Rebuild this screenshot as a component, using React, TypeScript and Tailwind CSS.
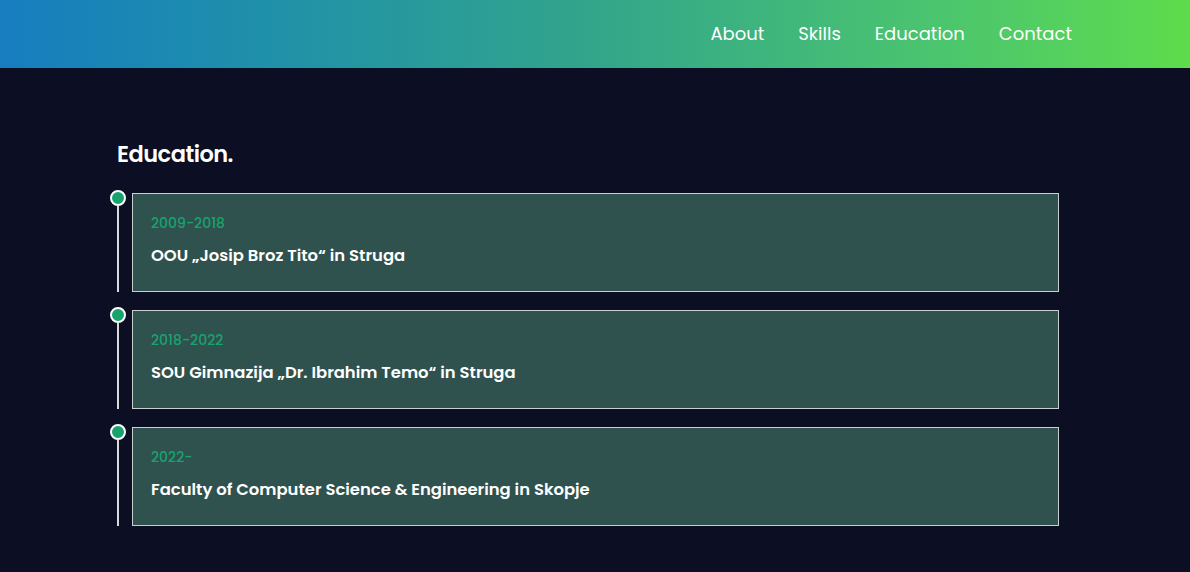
const navItems = ['About', 'Skills', 'Education', 'Contact'];

const education = [
  { years: '2009-2018', school: 'OOU „Josip Broz Tito“ in Struga' },
  { years: '2018-2022', school: 'SOU Gimnazija „Dr. Ibrahim Temo“ in Struga' },
  { years: '2022-', school: 'Faculty of Computer Science & Engineering in Skopje' },
];

function TimelineItem({ years, school, last }: { years: string; school: string; last: boolean }) {
  return (
    <div className={`flex ${last ? '' : 'pb-[15px]'}`}>
      <div className="flex w-4 flex-col items-center">
        <div className="h-4 w-4 shrink-0 rounded-full border-2 border-white bg-[#17a26e]" />
        <div className="w-[2px] flex-1 bg-[#d9d9d9]" />
      </div>
      <div className="ml-[6px] mt-[3px] flex h-[99px] flex-1 flex-col border border-[#c9cfcd] bg-[#2f524f] pl-[18px] pt-[19px]">
        <p className="text-[14px] font-medium leading-5 text-[#18a36c]">{years}</p>
        <h3 className="mt-[11px] text-[16.4px] font-semibold leading-6 text-white">{school}</h3>
      </div>
    </div>
  );
}

export default function App() {
  return (
    <div
      className="min-h-[572px] bg-[#0c0e23]"
      style={{ fontFamily: 'Poppins, Inter, "Noto Sans", sans-serif' }}
    >
      <header className="flex h-[68px] items-center justify-end bg-gradient-to-r from-[#177dbf] via-[#33a58a] to-[#5edc4a] pr-[118px]">
        <nav className="flex gap-[34px] pb-[1px]">
          {navItems.map((item) => (
            <a key={item} className="text-[18px] font-normal text-white">
              {item}
            </a>
          ))}
        </nav>
      </header>

      <section className="pl-[110px] pr-[131px] pt-[70px]">
        <h2 className="ml-[7px] text-[22.5px] font-semibold leading-8 tracking-[-0.5px] text-white">Education.</h2>
        <div className="mt-[20px]">
          {education.map((e, i) => (
            <TimelineItem key={i} years={e.years} school={e.school} last={i === education.length - 1} />
          ))}
        </div>
      </section>
    </div>
  );
}
